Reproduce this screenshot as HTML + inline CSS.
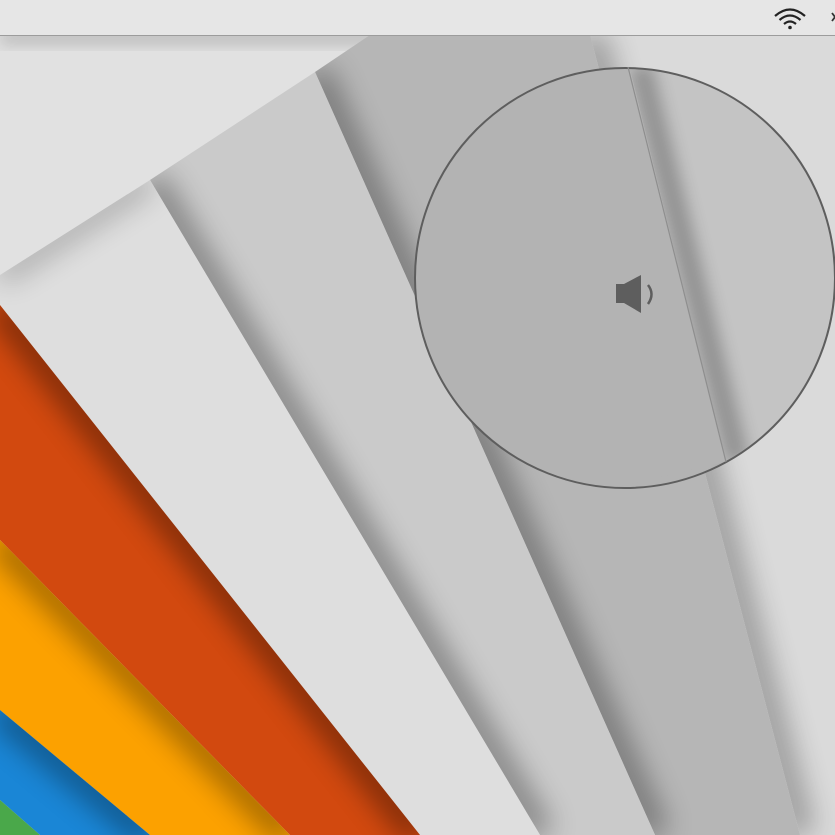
<!DOCTYPE html>
<html><head><meta charset="utf-8"><style>
html,body{margin:0;padding:0;width:835px;height:835px;overflow:hidden;background:#e0e0e0}
svg{display:block}
</style></head><body>
<svg width="835" height="835" viewBox="0 0 835 835" xmlns="http://www.w3.org/2000/svg">
<defs>
<filter id="bl" x="-50%" y="-50%" width="200%" height="200%"><feGaussianBlur stdDeviation="14"/></filter>
<filter id="bl2" x="-50%" y="-50%" width="200%" height="200%"><feGaussianBlur stdDeviation="8"/></filter>
<clipPath id="cD"><polygon points="590,35 835,35 835,835 800,835"/></clipPath>
<clipPath id="cC"><polygon points="315,72 370,35 590,35 800,835 655,835"/></clipPath>
<clipPath id="cB"><polygon points="150,180 315,72 655,835 540,835"/></clipPath>
<clipPath id="cA"><polygon points="0,275 150,180 540,835 420,835 0,305"/></clipPath>
<clipPath id="cO"><polygon points="0,305 420,835 290,835 0,540"/></clipPath>
<clipPath id="cY"><polygon points="0,540 290,835 150,835 0,710"/></clipPath>
<clipPath id="cBl"><polygon points="0,710 150,835 40,835 0,800"/></clipPath>
<clipPath id="cc"><circle cx="625" cy="278" r="209"/></clipPath>
</defs>
<rect x="0" y="35" width="835" height="800" fill="#e1e1e1"/>
<rect x="0" y="30" width="835" height="14" fill="#000" opacity="0.18" filter="url(#bl2)"/>
<!-- band D -->
<polygon points="590,35 835,35 835,835 800,835" fill="#dadada"/>
<g clip-path="url(#cD)"><line x1="590" y1="35" x2="800" y2="835" stroke="#000" stroke-width="30" opacity="0.3" filter="url(#bl)"/></g>
<!-- band C -->
<polygon points="315,72 370,35 590,35 800,835 655,835" fill="#b6b6b6"/>
<g clip-path="url(#cC)"><line x1="315" y1="72" x2="655" y2="835" stroke="#000" stroke-width="30" opacity="0.35" filter="url(#bl)"/></g>
<!-- band B -->
<polygon points="150,180 315,72 655,835 540,835" fill="#cacaca"/>
<g clip-path="url(#cB)"><line x1="150" y1="180" x2="540" y2="835" stroke="#000" stroke-width="30" opacity="0.35" filter="url(#bl)"/></g>
<!-- band A -->
<polygon points="0,275 150,180 540,835 420,835 0,305" fill="#dedede"/>
<g clip-path="url(#cA)"><line x1="0" y1="275" x2="150" y2="180" stroke="#000" stroke-width="20" opacity="0.25" filter="url(#bl)"/></g>
<!-- orange -->
<polygon points="0,305 420,835 290,835 0,540" fill="#d2490f"/>
<g clip-path="url(#cO)"><line x1="0" y1="305" x2="420" y2="835" stroke="#000" stroke-width="30" opacity="0.4" filter="url(#bl)"/></g>
<!-- yellow -->
<polygon points="0,540 290,835 150,835 0,710" fill="#fca100"/>
<g clip-path="url(#cY)"><line x1="0" y1="540" x2="290" y2="835" stroke="#000" stroke-width="30" opacity="0.35" filter="url(#bl)"/></g>
<!-- blue -->
<polygon points="0,710 150,835 40,835 0,800" fill="#1a86d6"/>
<g clip-path="url(#cBl)"><line x1="0" y1="710" x2="150" y2="835" stroke="#000" stroke-width="30" opacity="0.35" filter="url(#bl)"/></g>
<!-- green -->
<polygon points="0,800 40,835 0,835" fill="#4aa84a"/>
<!-- circle -->
<circle cx="625" cy="278" r="210" fill="#b3b3b3"/>
<g clip-path="url(#cc)">
<polygon points="628,60 840,60 840,500 726,462" fill="#c4c4c4"/>
<line x1="628" y1="66" x2="726" y2="462" stroke="#000" stroke-width="24" opacity="0.25" filter="url(#bl2)" transform="translate(12,0)"/>
<polygon points="628,60 560,60 560,500 726,462" fill="#b3b3b3"/>
</g>
<circle cx="625" cy="278" r="210" fill="none" stroke="#5e5e5e" stroke-width="2"/>
<line x1="628" y1="67" x2="726" y2="462" stroke="#8e8e8e" stroke-width="1.2"/>
<!-- speaker -->
<rect x="616" y="284" width="9" height="19" fill="#5e5e5e"/>
<polygon points="624,284 641,275 641,313 624,303" fill="#5e5e5e"/>
<path d="M648,285 Q655,294 648,304" fill="none" stroke="#5e5e5e" stroke-width="2.5"/>
<!-- top bar -->
<rect x="0" y="0" width="835" height="35" fill="#e6e6e6"/>
<line x1="0" y1="35.5" x2="835" y2="35.5" stroke="#9c9c9c"/>
<path d="M775,16 Q790,3 805,16" fill="none" stroke="#222" stroke-width="2.2"/>
<path d="M779.5,20 Q790,11 800.5,20" fill="none" stroke="#222" stroke-width="2.2"/>
<path d="M784,24 Q790,19 796,24" fill="none" stroke="#222" stroke-width="2.2"/>
<circle cx="790" cy="27.5" r="1.8" fill="#222"/>
<path d="M832,13 L838,21 M832,21 L838,13" stroke="#333" stroke-width="1.8"/>
</svg>
</body></html>
